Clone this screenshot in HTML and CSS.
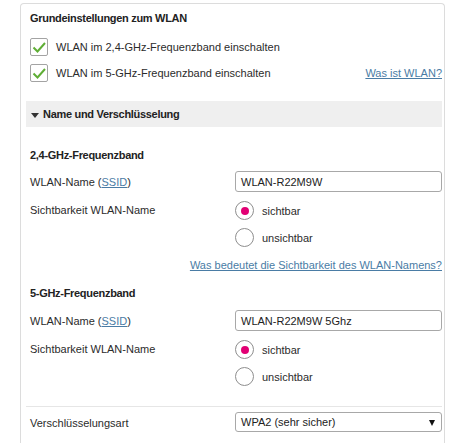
FILE: index.html
```html
<!DOCTYPE html>
<html lang="de">
<head>
<meta charset="utf-8">
<title>WLAN</title>
<link rel="stylesheet" href="styles.css">
</head>
<body>
<div class="panel">
  <h2 class="title">Grundeinstellungen zum WLAN</h2>
  <div class="check-row first">
    <span class="checkbox"><svg viewBox="0 0 18 18" width="18" height="18"><path d="M3.5 9.5 L7.5 13.5 L15 5" fill="none" stroke="#5fae35" stroke-width="2"/></svg></span>
    <span class="check-label">WLAN im 2,4-GHz-Frequenzband einschalten</span>
  </div>
  <div class="check-row">
    <span class="checkbox"><svg viewBox="0 0 18 18" width="18" height="18"><path d="M3.5 9.5 L7.5 13.5 L15 5" fill="none" stroke="#5fae35" stroke-width="2"/></svg></span>
    <span class="check-label">WLAN im 5-GHz-Frequenzband einschalten</span>
    <a class="link push" href="#">Was ist WLAN?</a>
  </div>
  <div class="bar"><span class="tri"></span>Name und Verschlüsselung</div>

  <h3 class="band">2,4-GHz-Frequenzband</h3>
  <div class="field-row">
    <span class="label">WLAN-Name (<a class="link" href="#">SSID</a>)</span>
    <span class="input">WLAN-R22M9W</span>
  </div>
  <div class="radio-row">
    <span class="label">Sichtbarkeit WLAN-Name</span>
    <div class="radios">
      <div class="radio-item"><span class="radio on"></span><span>sichtbar</span></div>
      <div class="radio-item"><span class="radio"></span><span>unsichtbar</span></div>
    </div>
  </div>
  <div class="link-row"><a class="link" href="#">Was bedeutet die Sichtbarkeit des WLAN-Namens?</a></div>

  <h3 class="band band2">5-GHz-Frequenzband</h3>
  <div class="field-row">
    <span class="label">WLAN-Name (<a class="link" href="#">SSID</a>)</span>
    <span class="input">WLAN-R22M9W 5Ghz</span>
  </div>
  <div class="radio-row">
    <span class="label">Sichtbarkeit WLAN-Name</span>
    <div class="radios">
      <div class="radio-item"><span class="radio on"></span><span>sichtbar</span></div>
      <div class="radio-item"><span class="radio"></span><span>unsichtbar</span></div>
    </div>
  </div>
  <div class="sep"></div>
  <div class="field-row select-row">
    <span class="label">Verschlüsselungsart</span>
    <span class="input select">WPA2 (sehr sicher)<span class="arrow"></span></span>
  </div>
</div>
</body>
</html>
```

FILE: styles.css
```css
html, body {
  margin: 0;
  padding: 0;
  background: #fff;
}
body {
  font-family: "Liberation Sans", Arial, sans-serif;
  font-size: 11px;
  color: #2b2b2b;
  line-height: 16px;
  overflow: hidden;
}
.panel {
  margin: 3px 0 0 20px;
  width: 416px;
  height: 434px;
  border: 1px solid #dcdcdc;
  border-bottom: 0;
  border-radius: 4px 4px 0 0;
  padding: 6px 2px 0 5px;
}
.title {
  margin: 0;
  padding-left: 4px;
  font-size: 11px;
  font-weight: bold;
  letter-spacing: -0.3px;
  color: #222;
  line-height: 16px;
}
.check-row {
  display: flex;
  align-items: center;
  height: 18px;
  padding-left: 4px;
  margin-top: 8px;
}
.check-row.first {
  margin-top: 12px;
}
.checkbox {
  width: 16px;
  height: 16px;
  border: 1px solid #a3a3a3;
  border-radius: 2px;
  background: #fff;
  position: relative;
  flex: none;
}
.checkbox svg {
  position: absolute;
  left: -1px;
  top: -1px;
}
.check-label {
  margin-left: 8px;
}
.push {
  margin-left: auto;
}
.link {
  color: #4a7ca5;
  text-decoration: underline;
}
.bar {
  margin-top: 19px;
  height: 26px;
  background: #efefef;
  display: flex;
  align-items: center;
  padding-left: 5px;
  font-weight: bold;
  letter-spacing: -0.3px;
  color: #222;
}
.tri {
  width: 0;
  height: 0;
  border-left: 4px solid transparent;
  border-right: 4px solid transparent;
  border-top: 5px solid #333;
  margin-right: 4px;
  margin-top: 2px;
}
.band {
  margin: 20px 0 0 0;
  padding-left: 4px;
  font-size: 11px;
  font-weight: bold;
  letter-spacing: -0.3px;
  color: #222;
  line-height: 16px;
}
.band2 {
  margin-top: 12px;
}
.field-row {
  display: flex;
  align-items: center;
  margin-top: 8px;
}
.band2 + .field-row {
  margin-top: 9px;
}
.label {
  width: 205px;
  padding-left: 4px;
  flex: none;
}
.input {
  flex: 1;
  height: 19px;
  border: 1px solid #a8a8a8;
  border-radius: 3px;
  padding-left: 5px;
  display: flex;
  align-items: center;
  background: #fff;
  color: #222;
}
.radio-row {
  display: flex;
  align-items: flex-start;
  margin-top: 9px;
}
.radio-row .label {
  line-height: 19px;
}
.radios {
  display: flex;
  flex-direction: column;
  gap: 8px;
}
.radio-item {
  display: flex;
  align-items: center;
  height: 19px;
  gap: 8px;
}
.radio {
  width: 17px;
  height: 17px;
  border: 1px solid #8e8e8e;
  border-radius: 50%;
  background: #fff;
  display: flex;
  align-items: center;
  justify-content: center;
  flex: none;
}
.radio.on::after {
  content: "";
  width: 8px;
  height: 8px;
  border-radius: 50%;
  background: #e20074;
}
.link-row {
  margin-top: 10px;
  text-align: right;
}
.sep {
  margin-top: 20px;
  height: 1px;
  background: #e6e6e6;
}
.select-row {
  margin-top: 5px;
}
.select-row .label {
  padding-top: 2px;
}
.select {
  height: 18px;
  position: relative;
}
.arrow {
  position: absolute;
  right: 6px;
  top: 7px;
  width: 0;
  height: 0;
  border-left: 3px solid transparent;
  border-right: 3px solid transparent;
  border-top: 6px solid #111;
}
```
